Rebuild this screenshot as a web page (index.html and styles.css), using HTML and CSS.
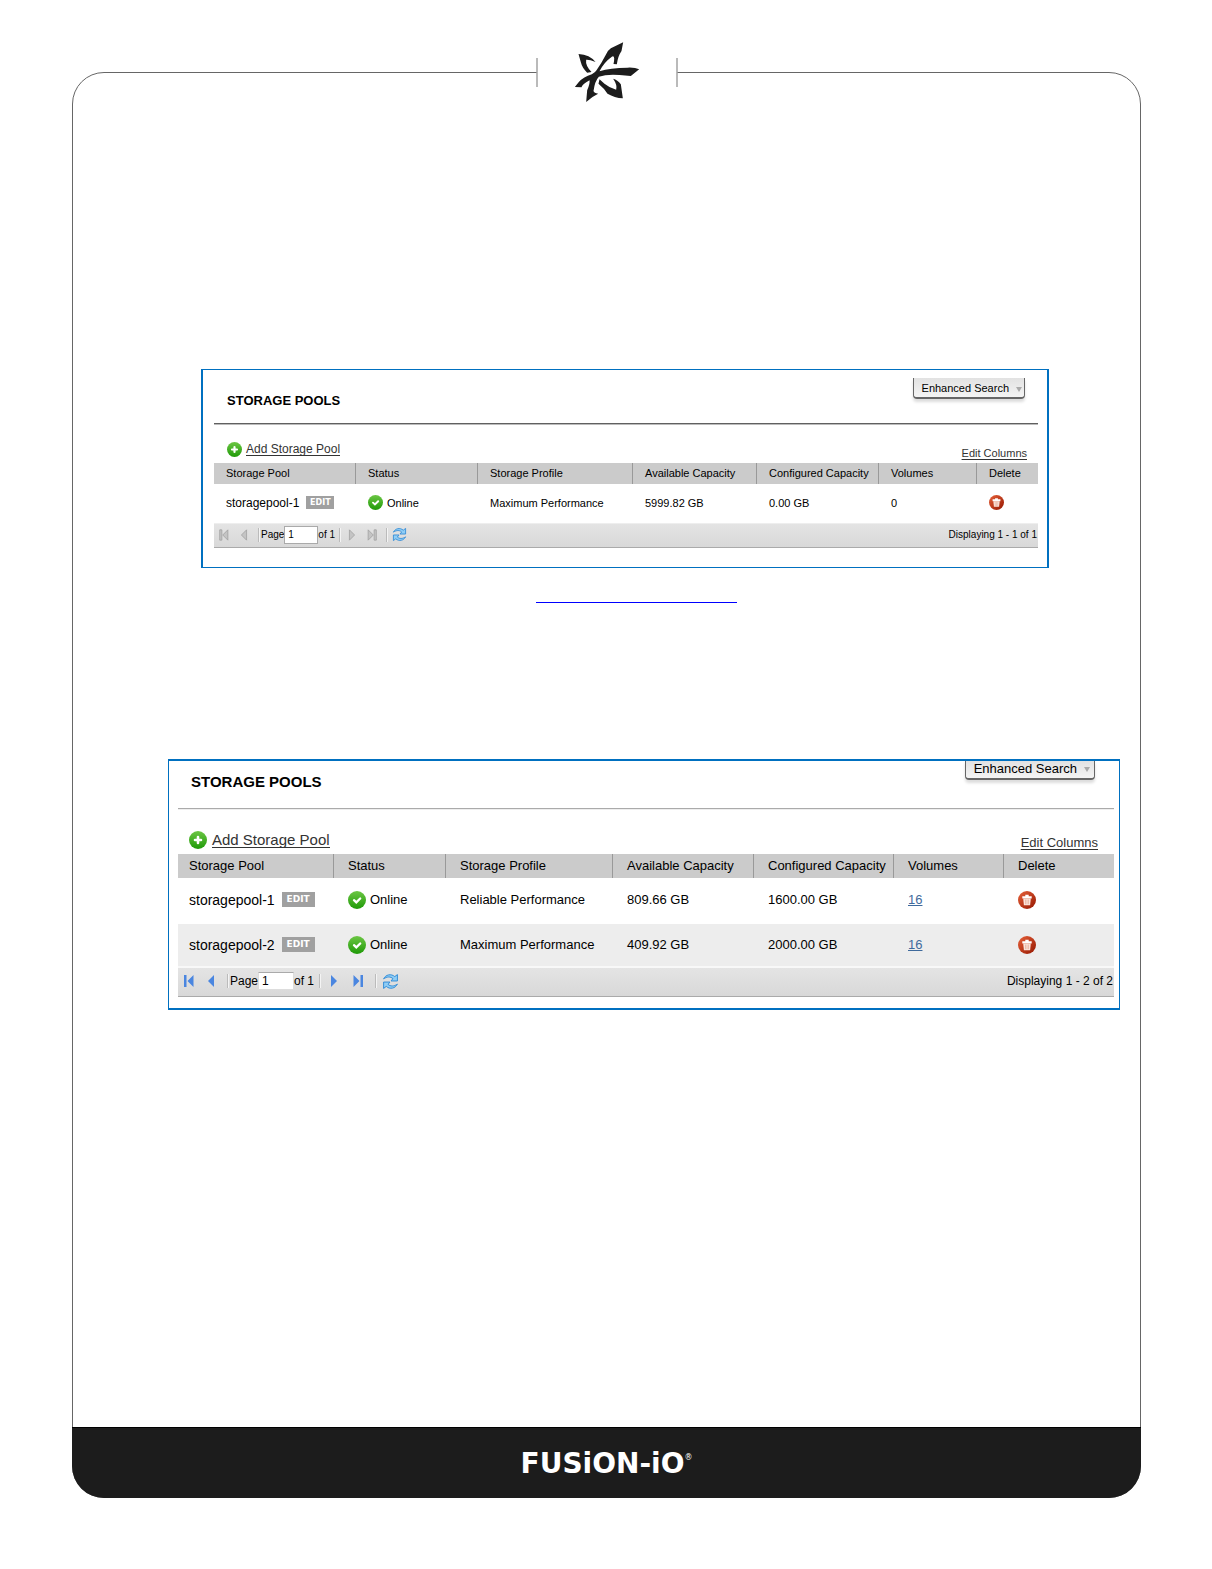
FILE: index.html
```html
<!DOCTYPE html>
<html lang="en">
<head>
<meta charset="utf-8">
<meta name="viewport" content="width=device-width, initial-scale=1">
<title>Storage Pools</title>
<link rel="stylesheet" href="styles.css">
</head>
<body>
<svg class="defs" width="0" height="0" aria-hidden="true">
  <defs>
    <linearGradient id="green" x1="0" y1="0" x2="0" y2="1"><stop offset="0" stop-color="#6cc644"/><stop offset="1" stop-color="#1f9a08"/></linearGradient>
    <linearGradient id="red" x1="0" y1="0" x2="1" y2="1"><stop offset="0" stop-color="#e8623a"/><stop offset="1" stop-color="#941600"/></linearGradient>
    <symbol id="add" viewBox="0 0 18 18"><circle cx="9" cy="9" r="9" fill="url(#green)"/><path d="M9 6v6M6 9h6" stroke="#fff" stroke-width="2.600" stroke-linecap="round"/></symbol>
    <symbol id="ok" viewBox="0 0 18 18"><circle cx="9" cy="9" r="9" fill="url(#green)"/><path d="M6 9.200l2.300 2.200 3.900-3.900" fill="none" stroke="#fff" stroke-width="2.300" stroke-linecap="round"/></symbol>
    <symbol id="trash" viewBox="0 0 18 18"><circle cx="9" cy="9" r="9" fill="url(#red)"/><path d="M4.300 5.200h3V3.800h3.400v1.400h3v2.200H4.300z" fill="#fff"/><path d="M5.200 7.400h7.600l-.7 6.800H5.900z" fill="#fbe3da"/><path d="M7.500 8.500v4.700M9 8.500v4.700M10.500 8.500v4.700" stroke="#e0a48f" stroke-width=".6"/></symbol>
    <symbol id="first" viewBox="0 0 12 14"><path d="M1 1h2.500v12H1zM10.500 1v12L4.500 7z"/></symbol>
    <symbol id="prev" viewBox="0 0 12 14"><path d="M9 1v12L3 7z"/></symbol>
    <symbol id="next" viewBox="0 0 12 14"><path d="M3 1v12l6-6z"/></symbol>
    <symbol id="last" viewBox="0 0 12 14"><path d="M8.500 1H11v12H8.500zM1.500 1v12l6-6z"/></symbol>
    <symbol id="refresh" viewBox="0 0 16 16"><g fill="#8fcdf5" stroke="#2f8ad6" stroke-width=".9" stroke-linejoin="round"><path d="M1.500 5.500C3.500 1.500 8.500.3 12 3.400L14.500 1.500V7.500H8.500L10.300 5.300C8 3.200 4.800 3.300 1.500 5.500z"/><path d="M14.500 10.500c-2 4-7 5.200-10.500 2.100L1.500 14.500V8.500h6L5.700 10.700c2.300 2.100 5.500 2 8.800-.2z"/></g></symbol>
  </defs>
</svg>

<div class="frame">
  <header class="crest">
    <svg class="crest-mark" viewBox="160 35 198 180" role="img" aria-label="Fusion-io">
      <path d="M309 36L272 54Q263 60 257 73Q244 98 229 120Q225 127 215 132Q190 140 176 155L164 170L184 171Q186 162 208 150Q210 160 201 180L198 215L217 200L234 190Q222 189 220 182Q224 152 236 139Q260 131 298 134L332 137L357 117Q345 111 322 112Q270 112 238 123Q250 97 275 79Q286 73 280 101L290 102Q293 78 304 62Z"/>
      <path d="M175 71Q209 73 226 95Q208 87 198 88Q195 105 214 125L201 127Q186 113 182 96Z"/>
      <path d="M238 147L253 160Q269 173 288 178Q292 164 279 145Q292 148 302 162L308 204Q283 202 262 190Q252 174 235 160Z"/>
    </svg>
  </header>

  <main class="content">
    <figure class="figure">
      <section class="panel panel--small">
        <div class="panel-head">
          <h2 class="panel-title">STORAGE POOLS</h2>
          <button class="search" type="button">Enhanced Search<span class="caret"></span></button>
        </div>
        <div class="tools">
          <a class="add" href="#"><svg class="icon"><use href="#add"/></svg><span class="add-text">Add Storage Pool</span></a>
          <a class="columns" href="#">Edit Columns</a>
        </div>
        <table class="pools">
          <colgroup><col class="c-pool"><col class="c-status"><col class="c-profile"><col class="c-available"><col class="c-configured"><col class="c-volumes"><col></colgroup>
          <thead>
            <tr><th>Storage Pool</th><th>Status</th><th>Storage Profile</th><th>Available Capacity</th><th>Configured Capacity</th><th>Volumes</th><th>Delete</th></tr>
          </thead>
          <tbody>
            <tr>
              <td><span class="cell"><span class="name">storagepool-1</span><button class="edit" type="button">EDIT</button></span></td>
              <td><span class="cell"><svg class="icon"><use href="#ok"/></svg>Online</span></td>
              <td>Maximum Performance</td><td>5999.82 GB</td><td>0.00 GB</td><td>0</td>
              <td><button class="delete" type="button" aria-label="Delete"><svg class="icon"><use href="#trash"/></svg></button></td>
            </tr>
          </tbody>
        </table>
        <div class="pager pager--off">
          <button class="turn turn--back" type="button" aria-label="First" disabled><svg class="arrow"><use href="#first"/></svg></button>
          <button class="turn turn--back" type="button" aria-label="Previous" disabled><svg class="arrow"><use href="#prev"/></svg></button>
          <span class="rule"></span>
          <label for="page-a">Page</label><input class="page" id="page-a" type="text" value="1"><span>of 1</span>
          <span class="rule"></span>
          <button class="turn" type="button" aria-label="Next" disabled><svg class="arrow"><use href="#next"/></svg></button>
          <button class="turn" type="button" aria-label="Last" disabled><svg class="arrow"><use href="#last"/></svg></button>
          <span class="rule"></span>
          <button class="turn" type="button" aria-label="Refresh"><svg class="reload"><use href="#refresh"/></svg></button>
          <span class="count">Displaying 1 - 1 of 1</span>
        </div>
      </section>
      <figcaption class="caption"><a class="caption-link" href="#" aria-label="Storage pools"></a></figcaption>
    </figure>

    <section class="panel panel--large">
      <div class="panel-head">
        <h2 class="panel-title">STORAGE POOLS</h2>
        <button class="search" type="button">Enhanced Search<span class="caret"></span></button>
      </div>
      <div class="tools">
        <a class="add" href="#"><svg class="icon"><use href="#add"/></svg><span class="add-text">Add Storage Pool</span></a>
        <a class="columns" href="#">Edit Columns</a>
      </div>
      <table class="pools">
        <colgroup><col class="c-pool"><col class="c-status"><col class="c-profile"><col class="c-available"><col class="c-configured"><col class="c-volumes"><col></colgroup>
        <thead>
          <tr><th>Storage Pool</th><th>Status</th><th>Storage Profile</th><th>Available Capacity</th><th>Configured Capacity</th><th>Volumes</th><th>Delete</th></tr>
        </thead>
        <tbody>
          <tr>
            <td><span class="cell"><span class="name">storagepool-1</span><button class="edit" type="button">EDIT</button></span></td>
            <td><span class="cell"><svg class="icon"><use href="#ok"/></svg>Online</span></td>
            <td>Reliable Performance</td><td>809.66 GB</td><td>1600.00 GB</td><td><a class="volumes" href="#">16</a></td>
            <td><button class="delete" type="button" aria-label="Delete"><svg class="icon"><use href="#trash"/></svg></button></td>
          </tr>
          <tr class="striped">
            <td><span class="cell"><span class="name">storagepool-2</span><button class="edit" type="button">EDIT</button></span></td>
            <td><span class="cell"><svg class="icon"><use href="#ok"/></svg>Online</span></td>
            <td>Maximum Performance</td><td>409.92 GB</td><td>2000.00 GB</td><td><a class="volumes" href="#">16</a></td>
            <td><button class="delete" type="button" aria-label="Delete"><svg class="icon"><use href="#trash"/></svg></button></td>
          </tr>
        </tbody>
      </table>
      <div class="pager">
        <button class="turn turn--back" type="button" aria-label="First"><svg class="arrow"><use href="#first"/></svg></button>
        <button class="turn turn--back" type="button" aria-label="Previous"><svg class="arrow"><use href="#prev"/></svg></button>
        <span class="rule"></span>
        <label for="page-b">Page</label><input class="page" id="page-b" type="text" value="1"><span>of 1</span>
        <span class="rule"></span>
        <button class="turn" type="button" aria-label="Next"><svg class="arrow"><use href="#next"/></svg></button>
        <button class="turn" type="button" aria-label="Last"><svg class="arrow"><use href="#last"/></svg></button>
        <span class="rule"></span>
        <button class="turn" type="button" aria-label="Refresh"><svg class="reload"><use href="#refresh"/></svg></button>
        <span class="count">Displaying 1 - 2 of 2</span>
      </div>
    </section>
  </main>

  <footer class="footer"><span class="brand">FUSiON-iO</span><span class="reg">®</span></footer>
</div>
</body>
</html>
```

FILE: styles.css
```css
* { box-sizing: border-box; }

body {
  display: flex;
  flex-direction: column;
  min-height: 100vh;
  margin: 0;
  padding: 72px 71px 71px 72px;
  background: #fff;
  color: #000;
  font-family: "Liberation Sans", Arial, sans-serif;
}

.defs { position: absolute; }

button {
  margin: 0;
  padding: 0;
  border: 0;
  background: none;
  color: inherit;
  font: inherit;
}

/* Document frame */
.frame {
  position: relative;
  display: flex;
  flex: 1;
  flex-direction: column;
  border: 1px solid #666;
  border-radius: 32px;
}

/* Sits over the break in the frame's top edge */
.crest {
  position: absolute;
  top: -15px;
  left: 50%;
  display: flex;
  align-items: center;
  justify-content: center;
  width: 141px;
  height: 29px;
  border: solid #777;
  border-width: 0 1px;
  background: #fff;
  transform: translateX(-50%);
}

.crest-mark {
  flex: none;
  width: 66px;
  height: 60px;
  margin-bottom: 2px;
  fill: #1c1c1c;
}

.content { flex: 1; padding: 296px 20px 80px 95px; }

.figure { margin: 0 71px 156px 33px; }

.caption {
  display: flex;
  justify-content: center;
  padding: 34px 0 0 23px;
}

.caption-link {
  width: 201px;
  border-bottom: 1px solid #00f;
}

/* Storage pool panels */
.panel {
  display: flex;
  flex-direction: column;
  border: solid #0070c0;
}

.panel--small {
  --text: 11px;
  --name: 12px;
  --small: 10px;
  --icon: 15px;
  --first: 12px;
  --pad: 12px;
  padding: 0 9px 19px 11px;
  border-width: 1px 2px;
}

.panel--large {
  --text: 13px;
  --name: 14px;
  --small: 12px;
  --icon: 18px;
  --first: 11px;
  --pad: 14px;
  padding: 0 5px 11px 9px;
  border-width: 2px 1px;
}

.panel-head {
  display: flex;
  align-items: flex-start;
  justify-content: space-between;
  border-bottom: 1px solid #aaa;
  box-shadow: 0 1px #eee;
}

.panel--small .panel-head {
  height: 54px;
  padding: 8px 13px 0;
  border-color: #606060;
  box-shadow: 0 1px #bbb;
}

.panel--large .panel-head { height: 48px; padding: 0 19px 0 13px; }

.panel-title {
  margin: 0;
  padding-top: 12px;
  font-size: 15px;
  line-height: 18px;
}

.panel--small .panel-title { padding-top: 14px; font-size: 13px; }

.search {
  display: flex;
  align-items: center;
  gap: 7px;
  height: 21px;
  padding: 0 2px 0 8px;
  border: solid #666;
  border-width: 0 1px 2px;
  border-radius: 0 0 4px 4px;
  background: linear-gradient(#e2e2e2, #f4f4f4);
  box-shadow: 0 3px 3px #ddd;
  color: #000;
  font-size: var(--text);
}

.panel--large .search { height: 19px; padding: 0 4px 3px 8px; }

.caret {
  margin-top: 3px;
  border: solid transparent;
  border-width: 5px 3px 0;
  border-top-color: #aaa;
}

.tools {
  display: flex;
  align-items: center;
  justify-content: space-between;
  height: 39px;
  padding: 12px 11px 0 13px;
}

.panel--large .tools { height: 45px; padding: 16px 16px 0 11px; }

.add {
  display: flex;
  align-items: center;
  gap: 4px;
  color: #333;
  font-size: 12px;
  text-decoration: none;
}

.panel--large .add { gap: 5px; font-size: 15px; }

.add-text {
  border-bottom: 1px solid #333;
  line-height: 12px;
}

.panel--large .add-text { line-height: 15px; }

.columns {
  padding-top: 6px;
  color: #333;
  font-size: var(--text);
  text-underline-offset: 2px;
}

.icon {
  flex: none;
  display: block;
  width: var(--icon);
  height: var(--icon);
}

.pools {
  width: 100%;
  border-collapse: separate;
  border-spacing: 0;
  table-layout: fixed;
  font-size: var(--text);
}

.panel--small .c-pool { width: 142px; }
.panel--small .c-status { width: 122px; }
.panel--small .c-profile { width: 155px; }
.panel--small .c-available { width: 124px; }
.panel--small .c-configured { width: 122px; }
.panel--small .c-volumes { width: 98px; }

.panel--large .c-pool { width: 156px; }
.panel--large .c-status { width: 112px; }
.panel--large .c-profile { width: 167px; }
.panel--large .c-available { width: 141px; }
.panel--large .c-configured { width: 140px; }
.panel--large .c-volumes { width: 110px; }

.pools th,
.pools td {
  padding: 0 0 2px var(--pad);
  text-align: left;
  white-space: nowrap;
}

.pools th:first-child,
.pools td:first-child { padding-left: var(--first); }

.pools th {
  height: 21px;
  border-right: 1px solid #999;
  background: #cbcbcb;
  font-weight: 400;
}

.pools th:last-child { border-right: 0; }

.pools td { height: 39px; }

.panel--large .pools th { height: 24px; }
.panel--large .pools td { height: 46px; padding-bottom: 3px; }
.panel--large .pools .striped td { height: 42px; padding-bottom: 1px; background: #ededed; }

.cell {
  display: flex;
  align-items: center;
  gap: 4px;
}

.name { font-size: var(--name); }

.edit {
  width: 28px;
  height: 13px;
  margin-left: 3px;
  background: #a0a0a0;
  color: #fff;
  font: bold 8px/13px "DejaVu Sans", sans-serif;
}

.panel--large .edit {
  width: 33px;
  height: 15px;
  font-size: 9px;
  line-height: 15px;
}

.delete { display: block; }

.volumes { color: #3f6a9c; }

/* Paging bar */
.pager {
  display: flex;
  align-items: center;
  height: 31px;
  padding-bottom: 2px;
  border-top: 2px solid #f8f8f8;
  border-bottom: 1px solid #aaa;
  background: linear-gradient(#e4e4e4, #d8d8d8);
  font-size: var(--small);
  white-space: nowrap;
}

.pager--off { height: 25px; border-top: 1px solid #eee; }

.turn {
  display: flex;
  flex: none;
  justify-content: center;
  width: 24px;
}

.turn--back { width: 22px; }

.pager--off .turn { width: 20px; }

.arrow {
  width: 12px;
  height: 14px;
  fill: #4a86e0;
}

.pager--off .arrow {
  height: 12px;
  fill: #c4c4c4;
  stroke: #a4a4a4;
  stroke-width: 1px;
}

.reload { width: 17px; height: 17px; }

.pager--off .reload { width: 15px; height: 15px; }

.rule {
  flex: none;
  width: 1px;
  height: 14px;
  margin: 0 2px 0 5px;
  background: #bbb;
  box-shadow: 1px 0 #f4f4f4;
}

.pager--off .rule { margin-left: 4px; }

.page {
  width: 36px;
  height: 18px;
  margin: 0;
  padding: 0 3px;
  border: 1px solid #ddd;
  border-top-color: #aaa;
  background: #fff;
  color: inherit;
  font: inherit;
}

.pager--off .page { width: 34px; border-color: #aaa; }

.count { margin-left: auto; padding-right: 1px; }

/* Bottom band */
.footer {
  display: flex;
  align-items: center;
  justify-content: center;
  height: 71px;
  margin: 0 -1px -1px;
  padding-top: 2px;
  border-top: 1px solid #000;
  border-radius: 0 0 32px 32px;
  background: #1c1c1c;
  color: #fff;
  font-family: "DejaVu Sans", sans-serif;
}

.brand {
  font-size: 28px;
  font-weight: 700;
  line-height: 32px;
}

.reg { padding-bottom: 14px; font-size: 8px; }
```
